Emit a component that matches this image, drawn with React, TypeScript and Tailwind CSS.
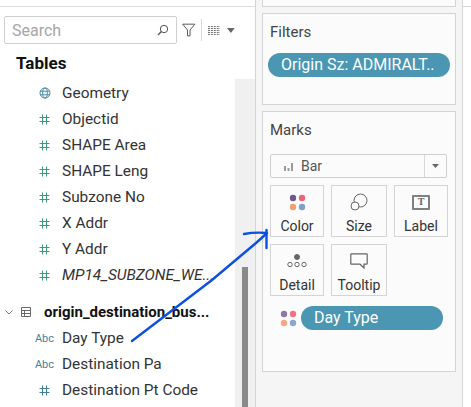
import type { ReactNode } from "react";

const Hash = ({ color = "#3f9a7d" }: { color?: string }) => (
  <svg width="11" height="11" viewBox="0 0 11 11" fill="none" stroke={color} strokeWidth="1">
    <path d="M3.5 0.5V10.5M7.5 0.5V10.5M0.5 3.5H10.5M0.5 7.5H10.5" />
  </svg>
);

const Globe = () => (
  <svg width="12" height="12" viewBox="0 0 12 12" fill="none" stroke="#4a8ba6" strokeWidth="1">
    <circle cx="6" cy="6" r="5" />
    <ellipse cx="6" cy="6" rx="2.3" ry="5" />
    <path d="M1 4.2H11M1 7.8H11" />
  </svg>
);

const Abc = () => <span className="text-[11px] leading-none text-[#3f7f9c]">Abc</span>;

const Field = ({ icon, name, italic }: { icon: ReactNode; name: string; italic?: boolean }) => (
  <div className="flex h-[26px] items-center">
    <div className="flex w-[62px] justify-end pr-[9px] shrink-0">
      <div className="flex w-[17px] justify-center">{icon}</div>
    </div>
    <span className={`pt-[2px] text-[15.4px] text-[#333333] whitespace-nowrap ${italic ? "italic" : ""}`}>{name}</span>
  </div>
);

const ColorDots = ({ faded }: { faded?: boolean }) => (
  <svg width="17" height="17" viewBox="0 0 17 17">
    <circle cx="4" cy="4" r="3.2" fill={faded ? "#8f77a6" : "#6f5a87"} />
    <circle cx="13" cy="4" r="3.2" fill={faded ? "#ee7486" : "#ea6579"} />
    <circle cx="4" cy="13" r="3.2" fill={faded ? "#f4a883" : "#f0a070"} />
    <circle cx="13" cy="13" r="3.2" fill={faded ? "#8ba6cf" : "#7e9fcb"} />
  </svg>
);

const MarkButton = ({ icon, label, width }: { icon: ReactNode; label: string; width: string }) => (
  <div className={`flex h-[52px] ${width} flex-col items-center border border-[#d4d4d4]`}>
    <div className="flex h-[32px] items-center justify-center">{icon}</div>
    <span className="text-[14px] leading-[16px] text-[#333333]">{label}</span>
  </div>
);

export default function App() {
  return (
    <div className="relative flex h-[407px] w-[471px] overflow-hidden bg-white font-['Roboto',sans-serif]">
      {/* data pane */}
      <div className="flex w-[255px] shrink-0 flex-col">
        <div className="h-[7px] shrink-0 border-b border-[#dcdcdc]" />
        <div className="flex flex-1">
          <div className="w-[235px] shrink-0">
            <div className="mt-[9px] flex items-center pl-[4px]">
              <div className="flex h-[28px] w-[178px] items-center justify-between rounded-[2px] border border-[#cfcfcf] pl-[7px] pr-[7px]">
                <span className="pt-[1px] text-[16px] text-[#a6a6a6]">Search</span>
                <svg width="12" height="12" viewBox="0 0 12 12" fill="none" stroke="#555555" strokeWidth="1">
                  <circle cx="7" cy="5" r="3.7" />
                  <path d="M4.4 7.6L1 11" strokeWidth="1.4" />
                </svg>
              </div>
              <svg className="ml-[5px]" width="14" height="14" viewBox="0 0 14 14" fill="none" stroke="#555555" strokeWidth="1">
                <path d="M0.7 1H13.3L8.3 7V13H5.7V7Z" />
              </svg>
              <div className="ml-[5px] h-[22px] w-px bg-[#d8d8d8]" />
              <svg className="ml-[6px]" width="13" height="11" viewBox="0 0 13 11" stroke="#666666" strokeWidth="1" strokeDasharray="2 1">
                <path d="M0 1.5H13M0 3.5H13M0 5.5H13M0 7.5H13M0 9.5H13" />
              </svg>
              <svg className="ml-[7px]" width="8" height="5" viewBox="0 0 8 5" fill="#666666">
                <path d="M0 0H8L4 5Z" />
              </svg>
            </div>

            <div className="mt-[7px] pl-[16px] text-[17px] font-bold leading-[24px] text-[#111111]">Tables</div>

            <div className="mt-[5px]">
              <Field icon={<Globe />} name="Geometry" />
              <Field icon={<Hash />} name="Objectid" />
              <Field icon={<Hash />} name="SHAPE Area" />
              <Field icon={<Hash />} name="SHAPE Leng" />
              <Field icon={<Hash />} name="Subzone No" />
              <Field icon={<Hash />} name="X Addr" />
              <Field icon={<Hash />} name="Y Addr" />
              <Field icon={<Hash />} name="MP14_SUBZONE_WE..." italic />
            </div>

            <div className="mt-[11px] flex h-[26px] items-center">
              <svg className="ml-[5px]" width="8" height="5" viewBox="0 0 8 5" fill="none" stroke="#777777" strokeWidth="1">
                <path d="M0.5 0.5L4 4L7.5 0.5" />
              </svg>
              <svg className="ml-[8px]" width="10" height="10" viewBox="0 0 10 10" fill="none" stroke="#666666" strokeWidth="1">
                <path d="M0.5 0.5H9.5V9.5H0.5ZM0.5 3.5H9.5M0.5 6.5H9.5M3.5 3.5V9.5" />
              </svg>
              <span className="ml-[13px] text-[15px] font-bold text-[#111111] whitespace-nowrap">origin_destination_bus...</span>
            </div>
            <Field icon={<Abc />} name="Day Type" />
            <Field icon={<Abc />} name="Destination Pa" />
            <Field icon={<Hash color="#3f7f9c" />} name="Destination Pt Code" />
          </div>

          {/* scrollbar */}
          <div className="mt-[72px] flex-1 bg-[#f0f0f0] pl-[7px] pt-[188px]">
            <div className="h-full w-[6px] bg-[#8a8a8a]" />
          </div>
        </div>
      </div>

      {/* shelves */}
      <div className="w-[208px] shrink-0 border-x border-[#d4d4d4] bg-[#f5f5f5] px-[6px]">
        <div className="h-[7px] border-x border-b border-[#d4d4d4] bg-[#fbfbfb]" />

        <div className="mt-[6px] h-[92px] border border-[#d4d4d4] bg-[#fbfbfb] px-[5px] pt-[8px]">
          <div className="pl-[2px] text-[15px] leading-[20px] text-[#444444]">Filters</div>
          <div className="mt-[11px] flex h-[24px] w-[182px] items-center rounded-full bg-[#4a96b3] pl-[13px] text-[16px] text-white whitespace-nowrap">
            Origin Sz: ADMIRALT..
          </div>
        </div>

        <div className="mt-[6px] h-[261px] border border-[#d4d4d4] bg-[#fbfbfb] pl-[7px] pt-[8px]">
          <div className="text-[15px] leading-[20px] text-[#444444]">Marks</div>
          <div className="mt-[14px] flex h-[24px] w-[177px] items-center rounded-[2px] border border-[#cfcfcf]">
            <div className="flex flex-1 items-center pl-[13px]">
              <svg width="9" height="9" viewBox="0 0 9 9" fill="#9a9a9a">
                <path d="M0 4H2V9H0ZM3.5 6H5.5V9H3.5ZM7 1H9V9H7Z" />
              </svg>
              <span className="ml-[8px] text-[14px] text-[#555555]">Bar</span>
            </div>
            <div className="flex h-full w-[22px] items-center justify-center border-l border-[#d8d8d8]">
              <svg width="7" height="4" viewBox="0 0 7 4" fill="#666666">
                <path d="M0 0H7L3.5 4Z" />
              </svg>
            </div>
          </div>

          <div className="mt-[7px] flex">
            <MarkButton width="w-[54px]" label="Color" icon={<ColorDots />} />
            <div className="w-[7px]" />
            <MarkButton
              width="w-[56px]"
              label="Size"
              icon={
                <svg width="18" height="18" viewBox="0 0 18 18" fill="none" stroke="#666666" strokeWidth="1">
                  <circle cx="10.5" cy="7.5" r="6.5" />
                  <circle cx="5" cy="13" r="4" fill="#fbfbfb" />
                </svg>
              }
            />
            <div className="w-[7px]" />
            <MarkButton
              width="w-[54px]"
              label="Label"
              icon={
                <div className="flex h-[15px] w-[18px] items-center justify-center rounded-[1px] border-2 border-[#808080] font-['Liberation_Serif',serif] text-[10px] font-bold leading-none text-[#666666]">
                  T
                </div>
              }
            />
          </div>
          <div className="mt-[7px] flex">
            <MarkButton
              width="w-[54px]"
              label="Detail"
              icon={
                <svg width="20" height="14" viewBox="0 0 20 14" fill="none" stroke="#666666" strokeWidth="1">
                  <circle cx="10" cy="3" r="2.5" fill="#666666" />
                  <circle cx="3" cy="10.5" r="2.2" />
                  <circle cx="10" cy="10.5" r="2.2" />
                  <circle cx="17" cy="10.5" r="2.2" />
                </svg>
              }
            />
            <div className="w-[7px]" />
            <MarkButton
              width="w-[56px]"
              label="Tooltip"
              icon={
                <svg width="18" height="16" viewBox="0 0 18 16" fill="none" stroke="#666666" strokeWidth="1.2">
                  <path d="M1.5 0.8H16.5Q17.2 0.8 17.2 1.5V10.5Q17.2 11.2 16.5 11.2H14V15L10 11.2H1.5Q0.8 11.2 0.8 10.5V1.5Q0.8 0.8 1.5 0.8Z" />
                </svg>
              }
            />
          </div>

          <div className="mt-[10px] flex items-center pl-[10px]">
            <ColorDots faded />
            <div className="ml-[4px] flex h-[24px] w-[142px] items-center rounded-full bg-[#4a96b3] pl-[13px] text-[16px] text-white">
              Day Type
            </div>
          </div>
        </div>
      </div>

      <div className="flex-1">
        <div className="h-[7px] border-b border-[#d4d4d4]" />
      </div>

      {/* hand drawn annotation arrow */}
      <svg className="absolute left-0 top-0 pointer-events-none" width="471" height="407" fill="none" stroke="#0b50e0" strokeWidth="2.4" strokeLinecap="round">
        <path d="M132 341L212 280L256 243L266 234" />
        <path d="M244 234Q255 232 267 233" />
        <path d="M266.5 230V248" />
      </svg>
    </div>
  );
}
